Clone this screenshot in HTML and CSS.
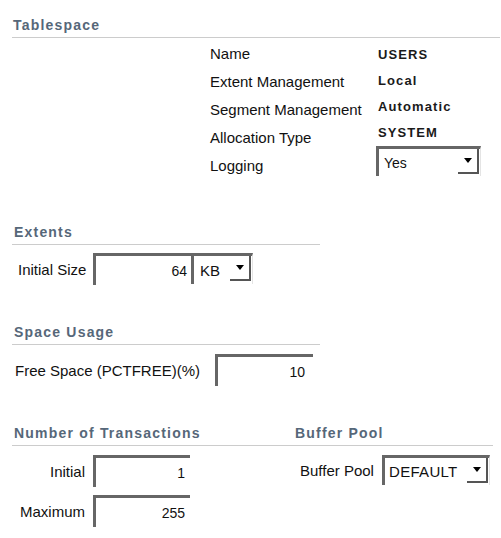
FILE: index.html
```html
<!DOCTYPE html>
<html>
<head>
<meta charset="utf-8">
<link rel="stylesheet" href="styles.css">
</head>
<body>
<div class="page">
  <section class="ts">
    <h2 class="hdr hdr-full">Tablespace</h2>
    <div class="ts-grid">
      <div class="ts-labels">
        <div>Name</div>
        <div>Extent Management</div>
        <div>Segment Management</div>
        <div>Allocation Type</div>
        <div>Logging</div>
      </div>
      <div class="ts-values">
        <div class="val">USERS</div>
        <div class="val">Local</div>
        <div class="val">Automatic</div>
        <div class="val">SYSTEM</div>
        <div class="sel sel-yes"><span class="sel-text">Yes</span><span class="sel-btn"><span class="tri"></span></span></div>
      </div>
    </div>
  </section>

  <section class="ext">
    <h2 class="hdr hdr-short">Extents</h2>
    <div class="row row-ext">
      <span class="lbl">Initial Size</span>
      <div class="field f-ext">64</div>
      <div class="sel sel-kb"><span class="sel-text">KB</span><span class="sel-btn"><span class="tri"></span></span></div>
    </div>
  </section>

  <section class="space">
    <h2 class="hdr hdr-short">Space Usage</h2>
    <div class="row row-free">
      <span class="lbl">Free Space (PCTFREE)(%)</span>
      <div class="field f-free">10</div>
    </div>
  </section>

  <section class="txn">
    <div class="col-left">
      <h2 class="hdr hdr-col">Number of Transactions</h2>
      <div class="txn-rows">
        <div class="row row-txn">
          <span class="lbl lbl-r">Initial</span>
          <div class="field f-txn">1</div>
        </div>
        <div class="row row-txn">
          <span class="lbl lbl-r">Maximum</span>
          <div class="field f-txn">255</div>
        </div>
      </div>
    </div>
    <div class="col-right">
      <h2 class="hdr hdr-col hdr-right">Buffer Pool</h2>
      <div class="row row-bp">
        <span class="lbl">Buffer Pool</span>
        <div class="sel sel-def"><span class="sel-text">DEFAULT</span><span class="sel-btn"><span class="tri"></span></span></div>
      </div>
    </div>
  </section>
</div>
</body>
</html>
```

FILE: styles.css
```css
html, body {
  margin: 0;
  padding: 0;
  background: #ffffff;
}
body {
  font-family: "Liberation Sans", Arial, sans-serif;
  color: #111111;
  font-size: 15px;
}
.page {
  width: 501px;
  height: 538px;
  overflow: hidden;
}
.hdr {
  margin: 0;
  font-size: 14px;
  line-height: 16px;
  font-weight: bold;
  letter-spacing: 1.2px;
  color: #566779;
  padding-bottom: 4px;
  border-bottom: 1px solid #cccccc;
}
.hdr-full {
  margin: 17px 1px 0 12px;
  padding-left: 1px;
}
.hdr-short {
  margin-left: 12px;
  width: 306px;
  padding-left: 2px;
}
.ts-grid {
  display: flex;
  margin-left: 210px;
}
.ts-labels {
  width: 168px;
  padding-top: 2px;
  line-height: 28px;
}
.ts-values {
  padding-top: 4px;
}
.val {
  font-size: 13px;
  font-weight: bold;
  letter-spacing: 1.1px;
  line-height: 26px;
  color: #1a1a1a;
}
.sel {
  display: flex;
  align-items: flex-start;
  box-sizing: border-box;
  border-top: 3px solid #666666;
  border-left: 3px solid #666666;
  border-right: 1px solid #e4e4e4;
  background: #ffffff;
}
.sel-text {
  flex: 1;
  align-self: center;
  padding-left: 5px;
}
.sel-btn {
  display: flex;
  align-items: center;
  justify-content: center;
  box-sizing: border-box;
  width: 21px;
  height: 25px;
  margin-right: 1px;
  border-right: 2px solid #555555;
  border-bottom: 2px solid #555555;
}
.tri {
  width: 0;
  height: 0;
  border-left: 4.5px solid transparent;
  border-right: 4.5px solid transparent;
  border-top: 5px solid #000000;
}
.sel-yes {
  margin-left: -2px;
  width: 105px;
  height: 30px;
  font-size: 14px;
}
.ext {
  margin-top: 44px;
}
.row {
  display: flex;
  align-items: center;
}
.row-ext {
  margin-top: 8px;
  padding-left: 18px;
}
.row-ext .lbl {
  width: 75px;
}
.field {
  box-sizing: border-box;
  border-top: 3px solid #666666;
  border-left: 3px solid #666666;
  background: #ffffff;
  text-align: right;
  font-size: 14px;
  display: flex;
  align-items: center;
  justify-content: flex-end;
  padding-right: 5px;
}
.f-ext {
  width: 98px;
  height: 32px;
  padding-right: 4px;
}
.sel-kb {
  width: 62px;
  height: 31px;
  align-self: flex-start;
}
.sel-kb .sel-text {
  padding-left: 6px;
  font-size: 15px;
}
.space {
  margin-top: 39px;
}
.row-free {
  margin-top: 9px;
  padding-left: 15px;
}
.row-free .lbl {
  width: 200px;
}
.f-free {
  width: 98px;
  height: 32px;
  padding-right: 8px;
}
.txn {
  display: flex;
  margin-top: 39px;
  margin-left: 12px;
  width: 481px;
}
.col-left {
  width: 283px;
}
.col-right {
  flex: 1;
}
.hdr-col {
  padding-left: 2px;
}
.hdr-right {
  padding-left: 0;
}
.txn-rows {
  display: flex;
  flex-direction: column;
  gap: 8px;
  margin-top: 9px;
}
.lbl-r {
  width: 73px;
  text-align: right;
  margin-right: 8px;
}
.f-txn {
  width: 97px;
  height: 32px;
  padding-right: 5px;
}
.row-bp {
  margin-top: 9px;
  padding-left: 5px;
}
.row-bp .lbl {
  width: 82px;
}
.sel-def {
  width: 108px;
  height: 30px;
}
.sel-def .sel-text {
  padding-left: 4px;
  font-size: 15px;
  letter-spacing: 0.3px;
}
```
